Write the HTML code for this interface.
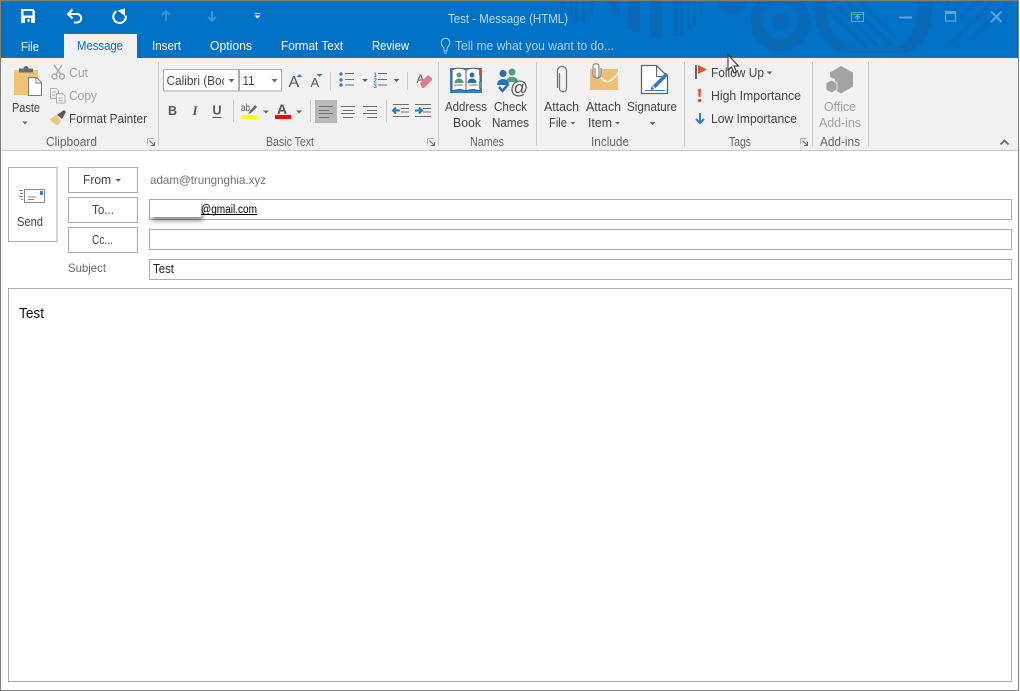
<!DOCTYPE html>
<html><head><meta charset="utf-8"><title>Test - Message (HTML)</title>
<style>
html,body{margin:0;padding:0;background:#fff;width:1020px;height:691px;overflow:hidden}
svg{display:block;position:absolute;left:0;top:0}
text{font-family:"Liberation Sans",sans-serif;font-size:12.5px;fill:#444}
.tab{fill:#fff}
.g{fill:#666}
.d{fill:#a2a2a2}
.sep{stroke:#c8c8c8;stroke-width:1}
.box{fill:#fff;stroke:#ababab;stroke-width:1}
.btn{fill:#fdfdfd;stroke:#ababab;stroke-width:1}
.ln{stroke:#6e6e6e;stroke-width:1;fill:none}
.ar{fill:#666}
.pat{fill:#0869b6}
</style></head><body>
<svg width="1020" height="691" viewBox="0 0 1020 691" xmlns="http://www.w3.org/2000/svg">
<defs>
<filter id="sh" x="-20%" y="-20%" width="150%" height="180%"><feDropShadow dx="2" dy="4" stdDeviation="2.200" flood-color="#000" flood-opacity=".42"/></filter>
<clipPath id="top"><rect x="1" y="1" width="1017" height="57"/></clipPath>
<clipPath id="cal"><rect x="164" y="70" width="60" height="20"/></clipPath>
</defs>
<!-- window -->
<rect width="1020" height="691" fill="#fff"/>
<rect x="1" y="1" width="1017" height="57" fill="#0072c6"/>
<!-- backdrop pattern -->
<g clip-path="url(#top)" class="pat">
<rect x="560" y="0" width="5" height="12"/><rect x="570" y="0" width="3" height="15"/><rect x="575" y="0" width="3" height="22"/><rect x="582" y="0" width="3" height="23"/><rect x="590" y="0" width="3" height="14"/>
<path d="M605 0h10l5 10v6l-6-4z"/>
<path d="M628 0h12v33l-12-4z"/><rect x="650" y="0" width="13" height="38"/><rect x="673" y="0" width="5" height="36"/><rect x="680" y="0" width="4" height="35"/><rect x="687" y="0" width="3" height="30"/><rect x="693" y="0" width="3" height="25"/><rect x="700" y="0" width="3" height="15"/>
<circle cx="732" cy="0" r="14"/>
<path fill-rule="evenodd" d="M780 -9a30 30 0 1 0 .01 0zM780 3a18 18 0 1 1 -.01 0z"/>
<circle cx="782" cy="21" r="9"/>
<path fill-rule="evenodd" d="M812 0C814 25 822 53 850 53H900C925 53 933 25 933 0zM825 0H918C917 25 910 48 890 48H858C835 48 826 25 825 0z"/>
<g stroke="#0869b6" stroke-width="3" fill="none">
<path d="M826 8L866 47M831 0L878 47M845 0L892 46M858 0L894 36"/>
<path d="M950 44L993 1M968 41L1009 1M943 8L955 -3M950 14L970 -5M958 20L981 -3"/>
</g>
</g>
<!-- QAT -->
<path fill-rule="evenodd" d="M21 9h12l2 2v12H21zM23.500 11v4.500h9V11zM25 18v5h6v-5z" fill="#fff"/>
<rect x="27.500" y="19" width="2" height="3" fill="#fff"/>
<g fill="none" stroke="#fff">
<path d="M69 14h8a4 4 0 0 1 0 8.500h-3M72.500 9.500L68 14l4.500 4.500" stroke-width="2"/>
<path d="M116.500 11.200A6.300 6.300 0 1 0 125.800 15.500" stroke-width="2"/>
</g>
<path d="M117.500 10.500L125 8.500v7.500z" fill="#fff"/>
<g fill="none" stroke="#3a92d4" stroke-width="2"><path d="M166 21V11M162 15l4-4 4 4"/><path d="M212 11v10M208 17l4 4 4-4"/></g>
<path d="M255 13.500h5" stroke="#fff"/><path d="M254.500 15.500h6l-3 3z" fill="#fff"/>
<!-- title -->
<text x="448" y="23" style="fill:#bcdcf3" textLength="120" lengthAdjust="spacingAndGlyphs">Test - Message (HTML)</text>
<!-- window buttons -->
<g fill="none" stroke="#5ea3da" stroke-width="1">
<rect x="851.500" y="12.500" width="12" height="9"/><path d="M851.500 14.500h12"/><path d="M857.500 20v-4M855 18l2.500-2.500 2.500 2.500" stroke-width="1.500"/>
<path d="M899 17.500h13" stroke-width="2"/>
<rect x="945.500" y="11.500" width="10" height="9.500" stroke-width="1.300"/><path d="M945.500 13h10" stroke-width="2"/>
<path d="M991 11.500l10.500 10.500M1001.500 11.500L991 22" stroke-width="2"/>
</g>
<!-- tabs -->
<rect x="64" y="34" width="73" height="24" fill="#f1f1f1"/>
<text class="tab" x="21" y="51" textLength="18" lengthAdjust="spacingAndGlyphs">File</text>
<text x="77" y="50" style="fill:#0c6cbd" textLength="46" lengthAdjust="spacingAndGlyphs">Message</text>
<text class="tab" x="152" y="50" textLength="29" lengthAdjust="spacingAndGlyphs">Insert</text>
<text class="tab" x="210" y="50" textLength="42" lengthAdjust="spacingAndGlyphs">Options</text>
<text class="tab" x="281" y="50" textLength="62" lengthAdjust="spacingAndGlyphs">Format Text</text>
<text class="tab" x="372" y="50" textLength="37" lengthAdjust="spacingAndGlyphs">Review</text>
<path d="M444 48.500v2.500h3v-2.500c0-1.300 2.800-2.600 2.800-6a4.300 4.300 0 1 0-8.600 0c0 3.400 2.800 4.700 2.800 6z" fill="none" stroke="#a9d3f1" stroke-width="1"/><path d="M444 53h3" stroke="#a9d3f1"/>
<text x="455" y="50" style="fill:#a9d3f1" textLength="159" lengthAdjust="spacingAndGlyphs">Tell me what you want to do...</text>
<!-- ribbon -->
<rect x="1" y="58" width="1017" height="92" fill="#f1f1f1"/>
<rect x="1" y="150" width="1017" height="1" fill="#c8c8c8"/>
<g class="sep"><path d="M158.500 62v84M438.500 62v84M536.500 62v84M684.500 62v84M812.500 62v84M868.500 62v84"/></g>
<!-- clipboard -->
<path d="M14 70h24v25H14z" fill="#eec277"/>
<path d="M19 68.500h4.500a2.500 2.500 0 0 1 5 0H33v4H19z" fill="#6b6b6b"/>
<path d="M28.500 77.500h8l5 5v13h-13z" fill="#fff" stroke="#7a7a7a"/><path d="M36 78v5h5" fill="none" stroke="#7a7a7a"/>
<text x="12" y="112" textLength="28" lengthAdjust="spacingAndGlyphs">Paste</text>
<path d="M22.500 121.500h5l-2.500 3z" class="ar"/>
<g fill="none" stroke="#ababab" stroke-width="1.500"><circle cx="54.500" cy="76.500" r="2.500"/><circle cx="62" cy="76.500" r="2.500"/><path d="M56 74L62 65M60.500 74L54 65"/></g>
<text class="d" x="69" y="77" textLength="19" lengthAdjust="spacingAndGlyphs">Cut</text>
<g fill="none" stroke="#b0b0b0"><path d="M50.500 88.500h6l2 2v8h-8z"/><path d="M56.500 93.500h6l2.500 2.500v7h-8.500z" fill="#f1f1f1"/><path d="M52 92h4M52 95h3M58.500 98h4M58.500 100.500h4"/></g>
<text class="d" x="69" y="100" textLength="28" lengthAdjust="spacingAndGlyphs">Copy</text>
<path d="M50 119l6-4 5 6-3 4c-3 0-6-3-8-6z" fill="#eec277"/><path d="M57 115l7-5 2 2-4 7z" fill="#5a5a5a"/>
<text x="69" y="123" textLength="78" lengthAdjust="spacingAndGlyphs">Format Painter</text>
<text class="g" x="46" y="146" textLength="51" lengthAdjust="spacingAndGlyphs">Clipboard</text>
<path d="M147.500 138.500h6M147.500 138.500v6" fill="none" stroke="#aaa"/><path d="M149.500 140.500l5 5M154.500 142v3.500H151" fill="none" stroke="#666"/>
<!-- font -->
<rect class="box" x="163.500" y="69.500" width="75" height="21.500" stroke="#b5b5b5"/>
<rect class="box" x="239.500" y="69.500" width="42" height="21.500"/>
<text x="166.500" y="85" clip-path="url(#cal)" textLength="61" lengthAdjust="spacingAndGlyphs">Calibri (Boc</text>
<path d="M228.500 79h6l-3 3.500z" class="ar"/>
<text x="242.500" y="85" textLength="12" lengthAdjust="spacingAndGlyphs">11</text>
<path d="M271.500 79h6l-3 3.500z" class="ar"/>
<text x="288.500" y="87" style="font-size:16px;fill:#555">A</text>
<path d="M296.500 77h6l-3-3z" fill="#3b7dbd"/>
<text x="310.500" y="87" style="font-size:13px;fill:#555">A</text>
<path d="M316.500 74h6l-3 3z" fill="#3b7dbd"/>
<path class="sep" d="M330.500 72v18M407.500 72v18M233.500 100v22M310.500 100v22M386.500 100v22"/>
<g fill="#3b7dbd"><circle cx="341" cy="74" r="1.700"/><circle cx="341" cy="80" r="1.700"/><circle cx="341" cy="85" r="1.700"/></g>
<path class="ln" d="M345 73.500h9M345 79.500h9M345 85h9"/>
<path d="M362 79h6l-3 3z" class="ar"/>
<text x="373.500" y="77" style="font-size:6px;fill:#3b7dbd;font-weight:bold">1</text><text x="373.500" y="82.500" style="font-size:6px;fill:#3b7dbd;font-weight:bold">2</text><text x="373.500" y="88" style="font-size:6px;fill:#3b7dbd;font-weight:bold">3</text>
<path class="ln" d="M378 73.500h9M378 79.500h9M378 85h9"/>
<path d="M393.500 79h6l-3 3z" class="ar"/>
<text x="416.500" y="83" style="font-size:12px;fill:#555">A</text>
<path d="M420 83l8-8 4 3.500 0 1.500-8 8h-2z" fill="#e8798b"/>
<text x="168" y="115" style="font-weight:bold;fill:#555;font-size:13px" textLength="9" lengthAdjust="spacingAndGlyphs">B</text>
<text x="192.500" y="115" style="font-style:italic;font-weight:bold;font-family:'Liberation Serif',serif;fill:#555;font-size:13px">I</text>
<text x="212.500" y="114.500" style="font-weight:bold;fill:#555;font-size:13px" textLength="9" lengthAdjust="spacingAndGlyphs">U</text>
<path d="M212.500 117.500h9" stroke="#555"/>
<text x="241" y="111" style="font-size:10px;fill:#555" textLength="9" lengthAdjust="spacingAndGlyphs">ab</text>
<path d="M248 114l2-3 5-6 2 2-6 6z" fill="#666"/>
<rect x="241" y="115" width="16" height="4" fill="#ffff00"/>
<path d="M263 110.500h6l-3 3z" class="ar"/>
<text x="277" y="114" style="font-size:14px;font-weight:bold;fill:#555">A</text>
<rect x="275" y="115" width="16" height="4" fill="#ff0000"/>
<path d="M296 110.500h6l-3 3z" class="ar"/>
<rect x="315" y="100" width="22" height="23" fill="#b8b8b8"/>
<path class="ln" d="M319 106.500h14M319 110.500h10M319 113.500h14M319 117.500h10"/>
<path class="ln" d="M341 106.500h14M343 110.500h10M341 113.500h14M343 117.500h10"/>
<path class="ln" d="M363 106.500h14M367 110.500h10M363 113.500h14M367 117.500h10"/>
<path class="ln" d="M393 104.500h16M401 108.500h8M401 112h8M393 116.500h16"/>
<path d="M393 110.500h7M396 107.500l-3 3 3 3" fill="none" stroke="#2b78c5" stroke-width="2"/>
<path class="ln" d="M415 104.500h16M423 108.500h8M423 112h8M415 116.500h16"/>
<path d="M415 110.500h7M419 107.500l3 3-3 3" fill="none" stroke="#2b78c5" stroke-width="2"/>
<text class="g" x="266" y="146" textLength="48" lengthAdjust="spacingAndGlyphs">Basic Text</text>
<path d="M427.500 138.500h6M427.500 138.500v6" fill="none" stroke="#aaa"/><path d="M429.500 140.500l5 5M434.500 142v3.500H431" fill="none" stroke="#666"/>
<!-- names -->
<path d="M450 68h32v25h-32z" fill="#3b7dbd"/>
<path d="M452 70c5-3 10-2 14 0 4-2 9-3 14 0v21c-5-2-10-2-14 0-4-2-9-2-14 0z" fill="#fff" stroke="#555"/>
<path d="M466 70v21" stroke="#555"/>
<rect x="479" y="69" width="3" height="6" fill="#d9532c"/><rect x="479" y="82" width="3" height="6" fill="#4f9e84"/>
<circle cx="459" cy="75" r="2.500" fill="#4f9e84"/><path d="M454.500 83c0-6 9-6 9 0z" fill="#4f9e84"/>
<circle cx="472" cy="75" r="2.500" fill="#2b6fb3"/><path d="M467.500 83c0-6 9-6 9 0z" fill="#2b6fb3"/>
<path d="M454 85h9M469 85h9" stroke="#777"/>
<text x="445" y="111" textLength="42" lengthAdjust="spacingAndGlyphs">Address</text>
<text x="453" y="127" textLength="28" lengthAdjust="spacingAndGlyphs">Book</text>
<circle cx="512" cy="72" r="3.500" fill="#4f9e84"/><path d="M506 82c0-7 12-7 12 0z" fill="#4f9e84"/>
<circle cx="503" cy="73.500" r="3.500" fill="#2b6fb3"/><path d="M497 85c0-8 12-8 12 0z" fill="#2b6fb3"/>
<path d="M499 87l3.500 4 6-7" fill="none" stroke="#2b6fb3" stroke-width="2.500"/>
<text x="510" y="94" style="font-size:18px;fill:#555">@</text>
<text x="494" y="111" textLength="33" lengthAdjust="spacingAndGlyphs">Check</text>
<text x="492" y="127" textLength="37" lengthAdjust="spacingAndGlyphs">Names</text>
<text class="g" x="470" y="146" textLength="34" lengthAdjust="spacingAndGlyphs">Names</text>
<!-- include -->
<path d="M559 73v15c0 5 7 5 7 0V71c0-6-9-6-9 0v17" fill="none" stroke="#777" stroke-width="1.300" transform="translate(.5 0)"/>
<text x="544" y="111" textLength="35" lengthAdjust="spacingAndGlyphs">Attach</text>
<text x="549" y="127" textLength="18" lengthAdjust="spacingAndGlyphs">File</text><path d="M570.500 122h5l-2.500 2.500z" class="ar"/>
<rect x="590" y="69" width="28" height="21" fill="#edc07a"/>
<path d="M600 76c5 8 10 8 18-3" fill="none" stroke="#fff" stroke-width="1.200"/>
<path d="M595 68v8c0 3 4 3 4 0V66c0-3-6-3-6 0v9c0 4 8 4 8 0v-7" fill="#f1f1f1" stroke="#777"/>
<text x="586" y="111" textLength="35" lengthAdjust="spacingAndGlyphs">Attach</text>
<text x="588" y="127" textLength="24" lengthAdjust="spacingAndGlyphs">Item</text><path d="M615 122h5l-2.500 2.500z" class="ar"/>
<path d="M641.500 65.500h15l11 11v17h-26z" fill="#fff" stroke="#666" stroke-width="1.300"/><path d="M656.500 65.500v11h11" fill="none" stroke="#666"/>
<path d="M654 87l13-13" stroke="#2f7ac4" stroke-width="3.500" fill="none"/><path d="M650.500 90l1-4 3 3z" fill="#2f7ac4"/><path d="M645 90.500h20" stroke="#2f7ac4"/>
<text x="627" y="111" textLength="50" lengthAdjust="spacingAndGlyphs">Signature</text>
<path d="M649.500 122h6l-3 3z" class="ar"/>
<text class="g" x="591" y="146" textLength="38" lengthAdjust="spacingAndGlyphs">Include</text>
<!-- tags -->
<rect x="695" y="65" width="2" height="14" fill="#666"/><path d="M698 65l9 4.500-9 4.500z" fill="#d9532c"/>
<text x="711" y="77" textLength="53" lengthAdjust="spacingAndGlyphs">Follow Up</text><path d="M766.500 71.500h6l-3 3z" class="ar"/>
<path d="M698 89h3l-.5 8h-2zM698 99h3v3h-3z" fill="#d9532c"/>
<text x="711" y="100" textLength="90" lengthAdjust="spacingAndGlyphs">High Importance</text>
<path d="M700 113v10M696 119l4 4 4-4" fill="none" stroke="#2f7ac4" stroke-width="2"/>
<text x="711" y="123" textLength="86" lengthAdjust="spacingAndGlyphs">Low Importance</text>
<text class="g" x="729" y="146" textLength="22" lengthAdjust="spacingAndGlyphs">Tags</text>
<path d="M800.500 138.500h6M800.500 138.500v6" fill="none" stroke="#aaa"/><path d="M802.500 140.500l5 5M807.500 142v3.500H804" fill="none" stroke="#666"/>
<!-- cursor -->
<path d="M728 55v15l3.500-3 2.500 6 2.500-1-2.500-6h4.500z" fill="#fff" stroke="#222" stroke-width="1"/>
<!-- add-ins -->
<path d="M841 66l12 6.500v14L841 93.500l-6-3.500v-11l-5-2v-4.500z" fill="#a3a3a3"/>
<path d="M831.500 80l5.500 3v7l-5.500 3-5.500-3v-7z" fill="#a3a3a3" stroke="#f1f1f1" stroke-width=".8"/>
<text class="d" x="824" y="111" textLength="32" lengthAdjust="spacingAndGlyphs">Office</text>
<text class="d" x="819" y="127" textLength="42" lengthAdjust="spacingAndGlyphs">Add-ins</text>
<text class="g" x="820" y="146" textLength="40" lengthAdjust="spacingAndGlyphs">Add-ins</text>
<path d="M1000.500 144.500l4-4 4 4" fill="none" stroke="#666" stroke-width="1.700"/>
<!-- form -->
<rect x="8.500" y="167.500" width="48.500" height="74" fill="#fdfdfd" stroke="#ababab"/>
<rect x="24.500" y="189.500" width="20" height="13" fill="#fff" stroke="#888"/>
<rect x="40" y="191" width="3" height="4" fill="#3b7dbd"/>
<path d="M28 197h8M28 199.500h6M19 190.500h4M20 193.500h3M19 196.500h4M21 199.500h2" stroke="#888" fill="none"/>
<text x="17" y="226" textLength="26" lengthAdjust="spacingAndGlyphs">Send</text>
<rect class="btn" x="68.500" y="167.500" width="69" height="25"/>
<rect class="btn" x="68.500" y="197.500" width="69" height="25"/>
<rect class="btn" x="68.500" y="227.500" width="69" height="25"/>
<text x="83" y="184" textLength="28" lengthAdjust="spacingAndGlyphs">From</text><path d="M115.500 179h5.500l-2.700 2.700z" fill="#555"/>
<text x="92" y="214" textLength="22" lengthAdjust="spacingAndGlyphs">To...</text>
<text x="92" y="244" textLength="21" lengthAdjust="spacingAndGlyphs">Cc...</text>
<text x="150" y="184" style="font-size:12px;fill:#707070" textLength="116" lengthAdjust="spacingAndGlyphs">adam@trungnghia.xyz</text>
<rect class="box" x="149.500" y="199.500" width="862" height="20"/>
<rect class="box" x="149.500" y="229.500" width="862" height="20"/>
<rect class="box" x="149.500" y="259.500" width="862" height="20"/>
<rect x="150" y="200" width="51" height="17" fill="#fff" filter="url(#sh)"/>
<text x="201" y="213" style="font-size:11.500px;fill:#000" textLength="56" lengthAdjust="spacingAndGlyphs">@gmail.com</text>
<path d="M201 214.500h56" stroke="#000"/>
<text x="68" y="272" style="font-size:12px;fill:#666" textLength="38" lengthAdjust="spacingAndGlyphs">Subject</text>
<text x="153" y="273" style="fill:#222" textLength="21" lengthAdjust="spacingAndGlyphs">Test</text>
<rect class="box" x="8.500" y="288.500" width="1003" height="393"/>
<text x="19" y="318" style="font-size:14.500px;fill:#111" textLength="25" lengthAdjust="spacingAndGlyphs">Test</text>
<!-- window frame -->
<rect x="0" y="0" width="1020" height="1" fill="#7f7f7f"/>
<rect x="0" y="0" width="1" height="691" fill="#7f7f7f"/>
<rect x="1018" y="0" width="1" height="691" fill="#7f7f7f"/>
<rect x="0" y="690" width="1019" height="1" fill="#7f7f7f"/>
<rect x="1019" y="0" width="1" height="691" fill="#fff"/>
</svg>
</body></html>
